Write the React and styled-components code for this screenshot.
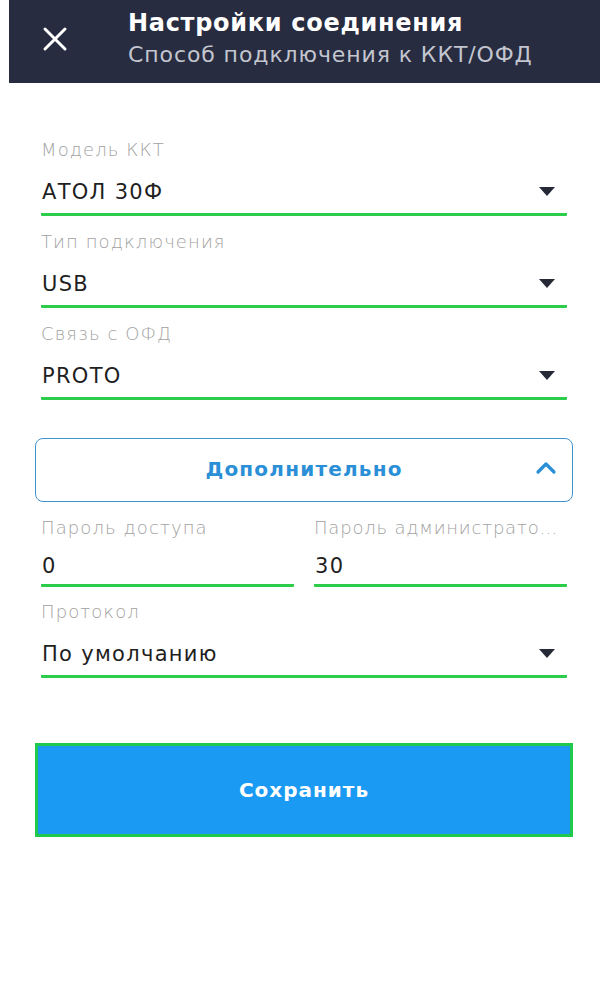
import React from "react";
import styled, { createGlobalStyle } from "styled-components";

const Global = createGlobalStyle`
  html, body { margin: 0; padding: 0; background: #ffffff; }
  body { font-family: "DejaVu Sans", "Open Sans", sans-serif; }
`;

const Page = styled.div`
  width: 610px;
  min-height: 1003px;
  padding: 0 10px 0 9px;
  box-sizing: border-box;
  background: #fff;
`;

const Header = styled.header`
  height: 83px;
  background: #272c40;
  display: flex;
  align-items: center;
`;

const CloseBtn = styled.button`
  width: 92px;
  height: 83px;
  border: 0;
  background: transparent;
  padding: 0 0 6px 0;
  display: flex;
  align-items: center;
  justify-content: center;
  cursor: pointer;
`;

const Titles = styled.div`
  display: flex;
  flex-direction: column;
  padding-left: 27px;
  padding-bottom: 4px;
`;

const Title = styled.div`
  color: #ffffff;
  font-size: 24px;
  font-weight: 700;
  line-height: 30px;
  letter-spacing: 0.7px;
`;

const Subtitle = styled.div`
  color: #c3c6cf;
  font-size: 22px;
  font-weight: 400;
  line-height: 34px;
  letter-spacing: 0.9px;
`;

const Content = styled.main`
  margin: 0 27px 0 26px;
  padding-top: 55px;
  display: flex;
  flex-direction: column;
`;

const Field = styled.div`
  display: flex;
  flex-direction: column;
  padding: 0 6px;
  flex: 1;
  min-width: 0;
`;

const Label = styled.div`
  color: #a2a2a2;
  font-size: 18px;
  font-weight: 300;
  line-height: 24px;
  height: 24px;
  letter-spacing: ${(p) => (p.$tight ? 0.8 : 1.1)}px;
  white-space: nowrap;
`;

const ValueRow = styled.div`
  display: flex;
  align-items: center;
  justify-content: space-between;
  height: ${(p) => p.$h}px;
  padding-top: 8px;
  border-bottom: 3px solid #2dcc4a;
  border-radius: 1px;
  box-sizing: border-box;
`;

const Value = styled.span`
  color: #1f1f1f;
  font-size: 21px;
  line-height: 28px;
  letter-spacing: 1.3px;
  padding-left: 1px;
`;

const Caret = styled.span`
  width: 0;
  height: 0;
  border-left: 8px solid transparent;
  border-right: 8px solid transparent;
  border-top: 9px solid #262a36;
  margin-right: 12px;
`;

const FieldGroup = styled.div`
  display: flex;
  flex-direction: column;
  gap: ${(p) => p.$gap}px;
  margin-top: ${(p) => p.$top || 0}px;
`;

const Pair = styled.div`
  display: flex;
  gap: 8px;
`;

const Accordion = styled.button`
  margin-top: 38px;
  height: 64px;
  border: 1.5px solid #3f93cf;
  border-radius: 8px;
  background: #fff;
  display: flex;
  align-items: center;
  justify-content: center;
  position: relative;
  font-family: inherit;
  color: #2a8fd6;
  font-size: 20px;
  font-weight: 700;
  letter-spacing: 1.2px;
  padding: 0 0 2px 0;
`;

const Chevron = styled.span`
  position: absolute;
  right: 15px;
  top: 21px;
  display: flex;
`;

const SaveButton = styled.button`
  margin-top: 65px;
  height: 94px;
  border: 3px solid #1fc94d;
  background: #1a9af3;
  color: #fff;
  font-family: inherit;
  font-size: 20px;
  font-weight: 700;
  letter-spacing: 1px;
  padding: 0;
`;

const SelectField = ({ label, value }) => (
  <Field>
    <Label>{label}</Label>
    <ValueRow $h={54}>
      <Value>{value}</Value>
      <Caret />
    </ValueRow>
  </Field>
);

const InputField = ({ label, value, tight }) => (
  <Field>
    <Label $tight={tight}>{label}</Label>
    <ValueRow $h={47}>
      <Value>{value}</Value>
    </ValueRow>
  </Field>
);

export default function App() {
  return (
    <Page>
      <Global />
      <Header>
        <CloseBtn aria-label="close">
          <svg width="26" height="26" viewBox="0 0 26 26">
            <path d="M3 3 L23 23 M23 3 L3 23" stroke="#fff" strokeWidth="3" strokeLinecap="round" />
          </svg>
        </CloseBtn>
        <Titles>
          <Title>Настройки соединения</Title>
          <Subtitle>Способ подключения к ККТ/ОФД</Subtitle>
        </Titles>
      </Header>
      <Content>
        <FieldGroup $gap={14}>
          <SelectField label="Модель ККТ" value="АТОЛ 30Ф" />
          <SelectField label="Тип подключения" value="USB" />
          <SelectField label="Связь с ОФД" value="PROTO" />
        </FieldGroup>
        <Accordion>
          Дополнительно
          <Chevron>
            <svg width="22" height="16" viewBox="0 0 22 16">
              <path d="M3 12 L11 4 L19 12" fill="none" stroke="#2a8fd6" strokeWidth="3.2" strokeLinecap="round" strokeLinejoin="round" />
            </svg>
          </Chevron>
        </Accordion>
        <FieldGroup $gap={13} $top={14}>
          <Pair>
            <InputField label="Пароль доступа" value="0" />
            <InputField label="Пароль администрато…" value="30" tight />
          </Pair>
          <SelectField label="Протокол" value="По умолчанию" />
        </FieldGroup>
        <SaveButton>Сохранить</SaveButton>
      </Content>
    </Page>
  );
}
